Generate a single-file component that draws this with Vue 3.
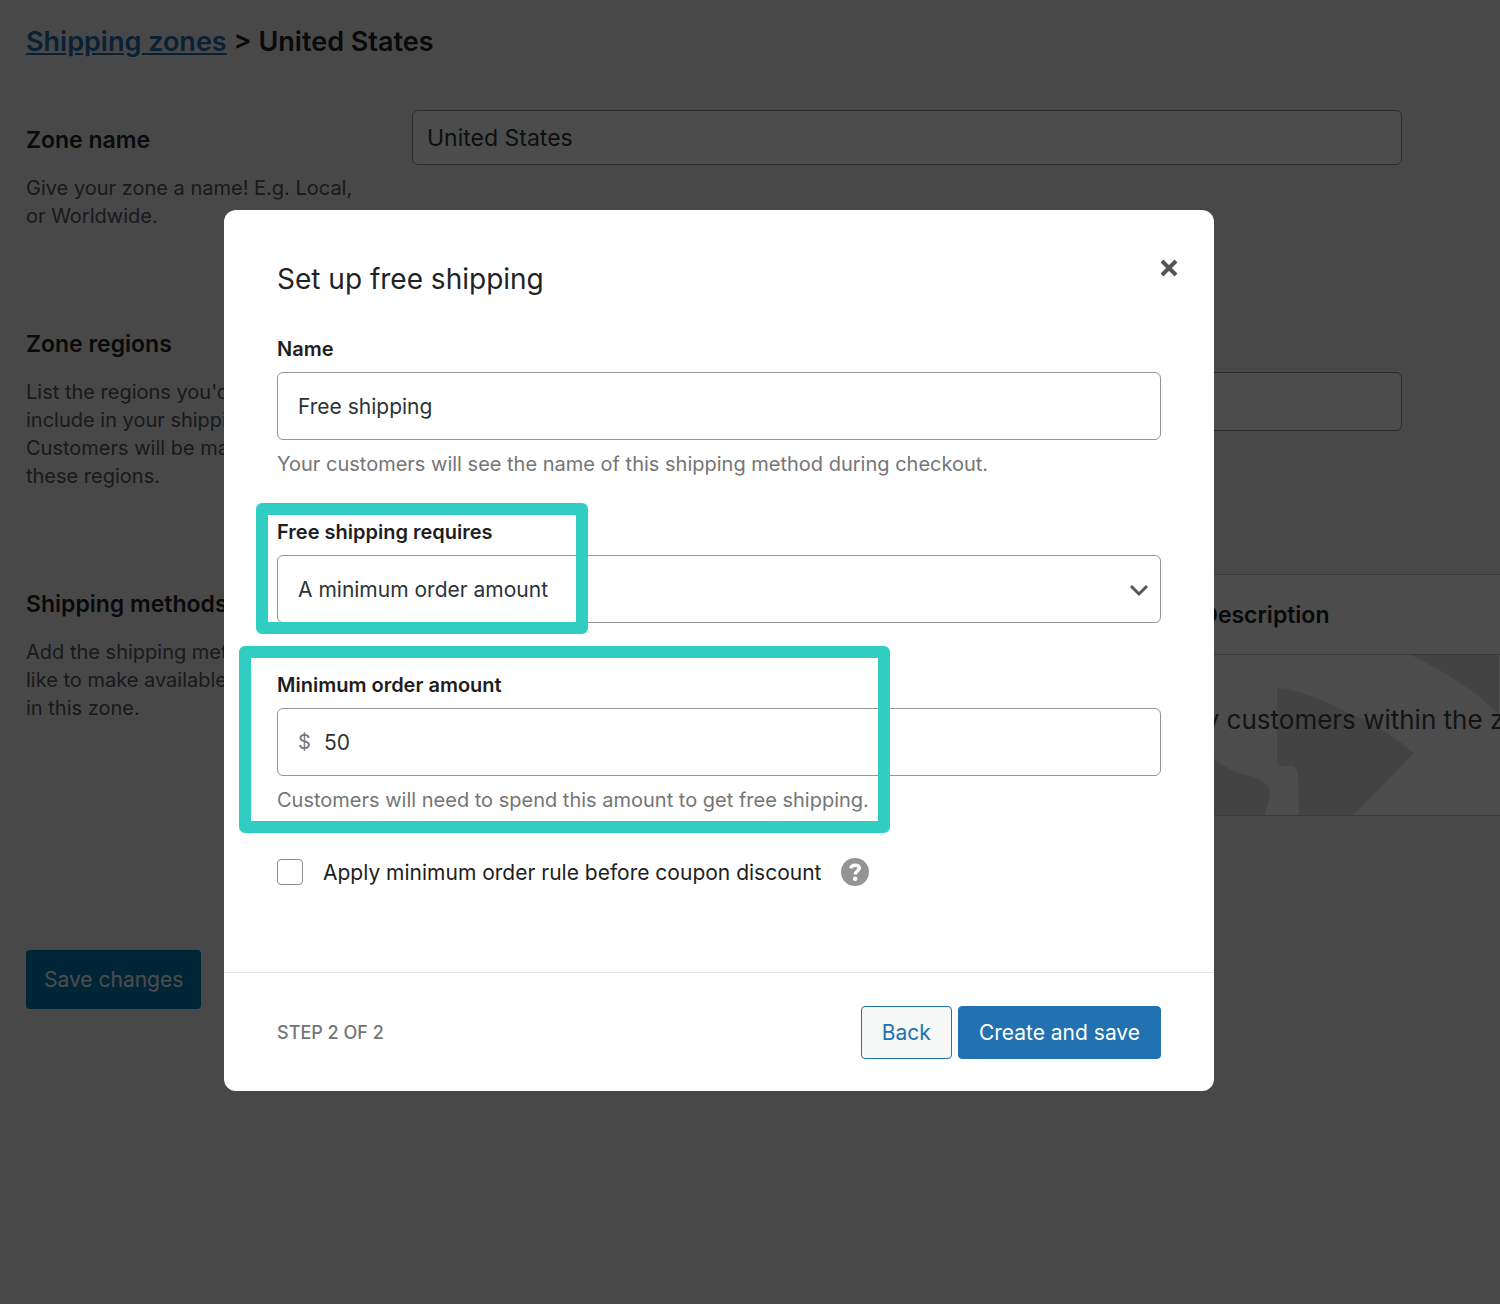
<script setup>
import { ref } from 'vue'

const zoneName = ref('United States')
const zoneRegions = ref('')
const methodName = ref('Free shipping')
const requirement = ref('min_amount')
const minAmount = ref('50')
const ignoreDiscounts = ref(false)

const requirements = [
  { value: 'none', label: 'No requirement' },
  { value: 'coupon', label: 'A valid free shipping coupon' },
  { value: 'min_amount', label: 'A minimum order amount' },
]
</script>

<template>
  <div class="app">
    <main class="page">
      <h1 class="crumbs"><a href="#zones">Shipping zones</a> &gt; United States</h1>

      <section class="row">
        <div class="about">
          <h2><label for="zone-name">Zone name</label></h2>
          <p>Give your zone a name! E.g. Local, or Worldwide.</p>
        </div>
        <div class="control">
          <input id="zone-name" v-model="zoneName" class="zone-input" type="text" />
        </div>
      </section>

      <section class="row">
        <div class="about">
          <h2><label for="zone-regions">Zone regions</label></h2>
          <p>List the regions you'd like to include in your shipping zone. Customers will be matched against these regions.</p>
        </div>
        <div class="control regions">
          <input id="zone-regions" v-model="zoneRegions" class="zone-input tall" type="text" />
        </div>
      </section>

      <section class="row">
        <div class="about">
          <h2>Shipping methods</h2>
          <p>Add the shipping methods you'd like to make available to customers in this zone.</p>
        </div>
        <div class="control methods">
          <table>
            <thead>
              <tr>
                <th class="col-title">Title</th>
                <th class="col-enabled">Enabled</th>
                <th>Description</th>
              </tr>
            </thead>
            <tbody>
              <tr>
                <td colspan="3">
                  <div class="empty">
                    <svg class="map" width="300" height="160" viewBox="0 0 300 160" aria-hidden="true">
                      <path d="M0 95 L14 103 Q34 119 56 122 L66 128 Q72 131 71 140 L66 160 L0 160 Z" />
                      <path d="M78 33 Q100 33 150 58 Q185 72 215 98 L180 134 L154 160 L100 160 L99 118 Q96 109 90 111 Q82 113 78 108 Z" />
                      <path d="M212 0 L300 0 L300 60 Q270 29 212 0 Z" />
                    </svg>
                    <span>Only customers within the zone will see them.</span>
                  </div>
                </td>
              </tr>
            </tbody>
          </table>
        </div>
      </section>

      <button class="save" type="button">Save changes</button>
    </main>

    <div class="overlay">
      <form class="modal" role="dialog" aria-modal="true" aria-labelledby="modal-title" @submit.prevent>
        <header class="modal-head">
          <h2 id="modal-title">Set up free shipping</h2>
          <button class="close" type="button" aria-label="Close">
            <svg width="20" height="20" viewBox="0 0 20 20" aria-hidden="true">
              <path d="M3 3 L17 17 M17 3 L3 17" />
            </svg>
          </button>
        </header>

        <div class="modal-body">
          <div class="field">
            <label for="method-name">Name</label>
            <div class="box">
              <input id="method-name" v-model="methodName" type="text" />
            </div>
            <p class="help">Your customers will see the name of this shipping method during checkout.</p>
          </div>

          <div class="field requires">
            <label for="requires">Free shipping requires</label>
            <div class="box">
              <select id="requires" v-model="requirement">
                <option v-for="r in requirements" :key="r.value" :value="r.value">{{ r.label }}</option>
              </select>
              <svg class="chevron" width="20" height="14" viewBox="0 0 20 14" aria-hidden="true">
                <path d="M2 2 L10 10 L18 2" />
              </svg>
            </div>
            <span class="highlight"></span>
          </div>

          <div class="field amount">
            <label for="min-amount">Minimum order amount</label>
            <div class="box">
              <span class="currency">$</span>
              <input id="min-amount" v-model="minAmount" type="text" inputmode="decimal" />
            </div>
            <p class="help">Customers will need to spend this amount to get free shipping.</p>
            <span class="highlight"></span>
          </div>

          <div class="check">
            <input id="ignore-discounts" v-model="ignoreDiscounts" type="checkbox" />
            <label for="ignore-discounts">Apply minimum order rule before coupon discount</label>
            <button class="tip" type="button" aria-label="Help">
              <svg width="28" height="28" viewBox="0 0 28 28" aria-hidden="true">
                <circle cx="14" cy="14" r="14" fill="#949494" />
                <path d="M9.8 10.4 C10.2 8 11.8 7.2 14.2 7.2 C16.8 7.2 18.3 8.3 18.3 10.2 C18.3 13 14.2 12.9 14.2 16.6" fill="none" stroke="#fff" stroke-width="3.4" />
                <circle cx="14.2" cy="20.8" r="2.3" fill="#fff" />
              </svg>
            </button>
          </div>
        </div>

        <footer class="modal-foot">
          <span class="step">STEP 2 OF 2</span>
          <div class="actions">
            <button class="btn secondary" type="button">Back</button>
            <button class="btn primary" type="submit">Create and save</button>
          </div>
        </footer>
      </form>
    </div>
  </div>
</template>

<style>
body {
  margin: 0;
  background: #f0f0f1;
}
</style>

<style scoped>
.app,
.app *,
.app *::before {
  box-sizing: border-box;
}
.app {
  font-family: Inter, "Liberation Sans", sans-serif;
  color: #1d2327;
  min-height: 100vh;
  background: #f0f0f1;
  overflow: hidden;
}
h1,
h2,
p {
  margin: 0;
}
input,
select,
button {
  font-family: inherit;
  margin: 0;
}

.page {
  padding: 24px 0 24px 26px;
}
.crumbs {
  font-size: 27px;
  line-height: 36px;
  font-weight: 600;
  margin-bottom: 50px;
}
.crumbs a {
  color: #2271b1;
}
.row {
  display: grid;
  grid-template-columns: 336px minmax(0, 1fr);
  column-gap: 50px;
  margin-bottom: 84px;
}
.about {
  padding-top: 16px;
}
.about h2 {
  font-size: 23px;
  line-height: 28px;
  font-weight: 600;
}
.about p {
  margin-top: 20px;
  font-size: 20px;
  line-height: 28px;
  color: #50575e;
}
.control {
  padding-right: 98px;
}
.control.regions {
  padding-top: 58px;
}
.control.methods {
  padding-right: 0;
}
.zone-input {
  display: block;
  width: 100%;
  height: 55px;
  padding: 0 14px;
  border: 1px solid #8c8f94;
  border-radius: 6px;
  background: #fff;
  color: #2c3338;
  font-size: 23px;
}
.zone-input.tall {
  height: 59px;
}
table {
  width: 125%;
  table-layout: fixed;
  border-collapse: collapse;
  border: 1px solid #c3c4c7;
  background: #fff;
}
th {
  height: 80px;
  padding: 0 24px;
  text-align: left;
  font-size: 23px;
  font-weight: 600;
  border-bottom: 1px solid #c3c4c7;
}
.col-title {
  width: 42%;
}
.col-enabled {
  width: 194px;
}
td {
  padding: 0;
}
.empty {
  position: relative;
  height: 160px;
  display: flex;
  align-items: center;
  padding-left: 750px;
  padding-bottom: 32px;
  font-size: 26px;
  color: #3c434a;
  white-space: nowrap;
}
.empty span {
  position: relative;
}
.map {
  position: absolute;
  left: 786px;
  top: 0;
  fill: #e1e1e1;
}
.save {
  display: block;
  margin-top: 134px;
  height: 59px;
  padding: 0 18px;
  border: 0;
  border-radius: 4px;
  background: #007cba;
  color: #fff;
  font-size: 21px;
}

.overlay {
  position: fixed;
  inset: 0;
  display: flex;
  align-items: center;
  justify-content: center;
  padding: 0 62px 3px 0;
  background: rgba(0, 0, 0, 0.7);
}
.modal {
  width: 66vw;
  background: #fff;
  border-radius: 12px;
}
.modal-head {
  display: flex;
  justify-content: space-between;
  align-items: flex-start;
  padding: 48px 35px 0 53px;
  margin-bottom: 35px;
}
.modal-head h2 {
  font-size: 28px;
  line-height: 42px;
  font-weight: 400;
}
.close,
.tip {
  display: flex;
  padding: 0;
  border: 0;
  background: none;
}
.close path {
  fill: none;
  stroke: #555;
  stroke-width: 4;
}
.modal-body {
  padding: 0 53px 86px;
}
.field {
  position: relative;
  margin-bottom: 40px;
}
.field label {
  display: block;
  margin-bottom: 9px;
  font-size: 20px;
  line-height: 28px;
  font-weight: 600;
  color: #1e1e1e;
}
.box {
  position: relative;
  display: flex;
  align-items: center;
  height: 68px;
  border: 1px solid #949494;
  border-radius: 6px;
  background: #fff;
}
.box input,
.box select {
  flex: 1;
  min-width: 0;
  height: 66px;
  padding: 0 20px;
  border: 0;
  border-radius: 6px;
  background: none;
  color: #2c3338;
  font-size: 21px;
  appearance: none;
}
.currency {
  width: 12px;
  margin-left: 20px;
  font-size: 20px;
  color: #757575;
}
.currency + input {
  padding-left: 14px;
}
.chevron {
  position: absolute;
  right: 11px;
  top: 28px;
  pointer-events: none;
}
.chevron path {
  fill: none;
  stroke: #50575e;
  stroke-width: 3;
}
.help {
  margin-top: 10px;
  font-size: 20px;
  line-height: 28px;
  color: #757575;
}
.requires {
  margin-bottom: 48px;
}
.amount {
  margin-bottom: 44px;
}
.highlight {
  position: absolute;
  border: 12px solid #30cec2;
  border-radius: 6px;
  pointer-events: none;
}
.requires .highlight {
  left: -21px;
  top: -15px;
  bottom: -11px;
  width: 332px;
}
.amount .highlight {
  left: -38px;
  top: -25px;
  bottom: -19px;
  width: 651px;
}
.check {
  display: flex;
  align-items: center;
  height: 28px;
}
.check input {
  appearance: none;
  width: 26px;
  height: 26px;
  border: 1px solid #8c8f94;
  border-radius: 4px;
  background: #fff;
}
.check input:checked {
  background: #2271b1;
}
.check label {
  margin: 0 20px;
  font-size: 21px;
  color: #1e1e1e;
}
.modal-foot {
  display: flex;
  align-items: center;
  justify-content: space-between;
  padding: 33px 53px 32px;
  border-top: 1px solid #e4e4e4;
}
.step {
  font-size: 18px;
  font-weight: 500;
  color: #757575;
}
.actions {
  display: flex;
  gap: 6px;
}
.btn {
  height: 53px;
  padding: 0 20px;
  border: 1px solid #2271b1;
  border-radius: 4px;
  font-size: 21px;
}
.secondary {
  background: #f6f7f7;
  color: #2271b1;
}
.primary {
  background: #2271b1;
  color: #fff;
}
</style>
